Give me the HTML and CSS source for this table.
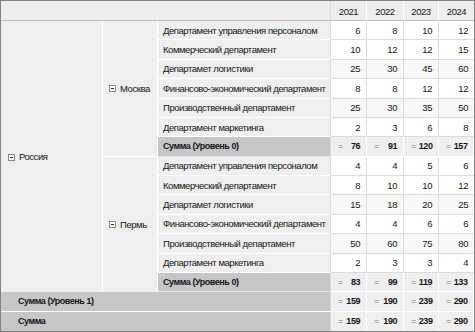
FILE: index.html
```html
<!DOCTYPE html>
<html>
<head>
<meta charset="utf-8">
<link rel="stylesheet" href="styles.css">
</head>
<body>
<div class="grid">
  <div class="hd-corner"></div>
  <div class="hd">2021</div>
  <div class="hd">2022</div>
  <div class="hd">2023</div>
  <div class="hd hd-last">2024</div>

  <div class="rh rh-country"><span class="tog"></span>Россия</div>
  <div class="rh rh-city rh-msk"><span class="tog"></span>Москва</div>
  <div class="rh rh-city rh-perm"><span class="tog"></span>Пермь</div>

  <!-- Moscow -->
  <div class="dep">Департамент управления персоналом</div>
  <div class="v">6</div><div class="v">8</div><div class="v">10</div><div class="v last">12</div>
  <div class="dep">Коммерческий департамент</div>
  <div class="v">10</div><div class="v">12</div><div class="v">12</div><div class="v last">15</div>
  <div class="dep">Департамет логистики</div>
  <div class="v alt">25</div><div class="v alt">30</div><div class="v alt">45</div><div class="v alt last">60</div>
  <div class="dep">Финансово-экономический департамент</div>
  <div class="v">8</div><div class="v">8</div><div class="v">12</div><div class="v last">12</div>
  <div class="dep">Производственный департамент</div>
  <div class="v alt">25</div><div class="v alt">30</div><div class="v alt">35</div><div class="v alt last">50</div>
  <div class="dep">Департамент маркетинга</div>
  <div class="v">2</div><div class="v">3</div><div class="v">6</div><div class="v last">8</div>
  <div class="sum-lab">Сумма (Уровень 0)</div>
  <div class="s"><span class="eq">=</span>76</div><div class="s"><span class="eq">=</span>91</div><div class="s"><span class="eq">=</span>120</div><div class="s last"><span class="eq">=</span>157</div>

  <!-- Perm -->
  <div class="dep">Департамент управления персоналом</div>
  <div class="v">4</div><div class="v">4</div><div class="v">5</div><div class="v last">6</div>
  <div class="dep">Коммерческий департамент</div>
  <div class="v">8</div><div class="v">10</div><div class="v">10</div><div class="v last">12</div>
  <div class="dep">Департамет логистики</div>
  <div class="v alt">15</div><div class="v alt">18</div><div class="v alt">20</div><div class="v alt last">25</div>
  <div class="dep">Финансово-экономический департамент</div>
  <div class="v">4</div><div class="v">4</div><div class="v">6</div><div class="v last">6</div>
  <div class="dep">Производственный департамент</div>
  <div class="v alt">50</div><div class="v alt">60</div><div class="v alt">75</div><div class="v alt last">80</div>
  <div class="dep">Департамент маркетинга</div>
  <div class="v">2</div><div class="v">3</div><div class="v">3</div><div class="v last">4</div>
  <div class="sum-lab">Сумма (Уровень 0)</div>
  <div class="s"><span class="eq">=</span>83</div><div class="s"><span class="eq">=</span>99</div><div class="s"><span class="eq">=</span>119</div><div class="s last"><span class="eq">=</span>133</div>

  <div class="tot-lab">Сумма (Уровень 1)</div>
  <div class="s"><span class="eq">=</span>159</div><div class="s"><span class="eq">=</span>190</div><div class="s"><span class="eq">=</span>239</div><div class="s last"><span class="eq">=</span>290</div>
  <div class="tot-lab tot-last">Сумма</div>
  <div class="s bottom"><span class="eq">=</span>159</div><div class="s bottom"><span class="eq">=</span>190</div><div class="s bottom"><span class="eq">=</span>239</div><div class="s bottom last"><span class="eq">=</span>290</div>
</div>
</body>
</html>
```
FILE: styles.css
```css
html, body {
  margin: 0;
  padding: 0;
  background: #ffffff;
}

.grid {
  box-sizing: border-box;
  width: 475px;
  height: 332px;
  border: 1px solid #828282;
  display: grid;
  grid-template-columns: 102px 55px 173px 36px 37px 35px 35px;
  grid-template-rows: 20px repeat(16, 19.375px);
  font-family: "Liberation Sans", Arial, sans-serif;
  font-size: 9.5px;
  letter-spacing: -0.45px;
  color: #161616;
  background: #efefef;
  overflow: hidden;
}

.grid > div {
  box-sizing: border-box;
  min-width: 0;
  white-space: nowrap;
  overflow: hidden;
}

.hd-corner {
  grid-column: 1 / 4;
  background: #eeeeee;
  border-right: 1px solid #dedede;
  border-bottom: 1px solid #bdbdbd;
}

.hd {
  background: #eeeeee;
  border-right: 1px solid #ffffff;
  border-bottom: 1px solid #bdbdbd;
  display: flex;
  align-items: center;
  justify-content: center;
  padding-top: 1px;
}

.hd-last { border-right: none; }

.rh {
  background: #efefef;
  display: flex;
  align-items: center;
}

.rh-country {
  grid-column: 1;
  grid-row: 2 / 16;
  border-right: 1px solid #ffffff;
  padding-left: 7px;
}

.rh-city {
  grid-column: 2;
  border-right: 1px solid #ffffff;
  padding-left: 6px;
}

.rh-msk { grid-row: 2 / 9; border-bottom: 1px solid #ffffff; }
.rh-perm { grid-row: 9 / 16; }

.tog {
  box-sizing: border-box;
  width: 7px;
  height: 7px;
  border: 1px solid #8a8a8a;
  background: #ffffff;
  margin-right: 4px;
  position: relative;
  flex: none;
  margin-top: 1px;
}

.tog::after {
  content: "";
  position: absolute;
  left: 1px;
  right: 1px;
  top: 2px;
  height: 1px;
  background: #333333;
}

.dep {
  grid-column: 3;
  background: #efefef;
  border-right: 1px solid #dcdcdc;
  border-bottom: 1px solid #ffffff;
  display: flex;
  align-items: center;
  padding-left: 5px;
}

.v {
  background: #ffffff;
  border-right: 1px solid #dcdcdc;
  border-bottom: 1px solid #dcdcdc;
  display: flex;
  align-items: center;
  justify-content: flex-end;
  padding-right: 6px;
}

.v.alt { background: #f8f8f8; }

.last { border-right: none; }

.sum-lab {
  grid-column: 3;
  background: #c6c6c6;
  border-right: 1px solid #dcdcdc;
  border-bottom: 1px solid #e4e4e4;
  display: flex;
  align-items: center;
  padding-left: 5px;
  font-weight: bold;
  font-size: 9px;
}

.s {
  background: #efefef;
  border-right: 1px solid #ffffff;
  border-bottom: 1px solid #ffffff;
  display: flex;
  align-items: center;
  justify-content: space-between;
  padding: 0 6px 0 7px;
  font-weight: bold;
  font-size: 9px;
}

.s.bottom { border-bottom: none; }

.eq {
  font-weight: normal;
  color: #7a7a7a;
  margin-right: 3px;
}

.tot-lab {
  grid-column: 1 / 4;
  background: #c6c6c6;
  border-right: 1px solid #dcdcdc;
  border-bottom: 1px solid #ffffff;
  display: flex;
  align-items: center;
  padding-left: 17px;
  font-weight: bold;
  font-size: 9px;
}

.tot-last { border-bottom: none; }
```
